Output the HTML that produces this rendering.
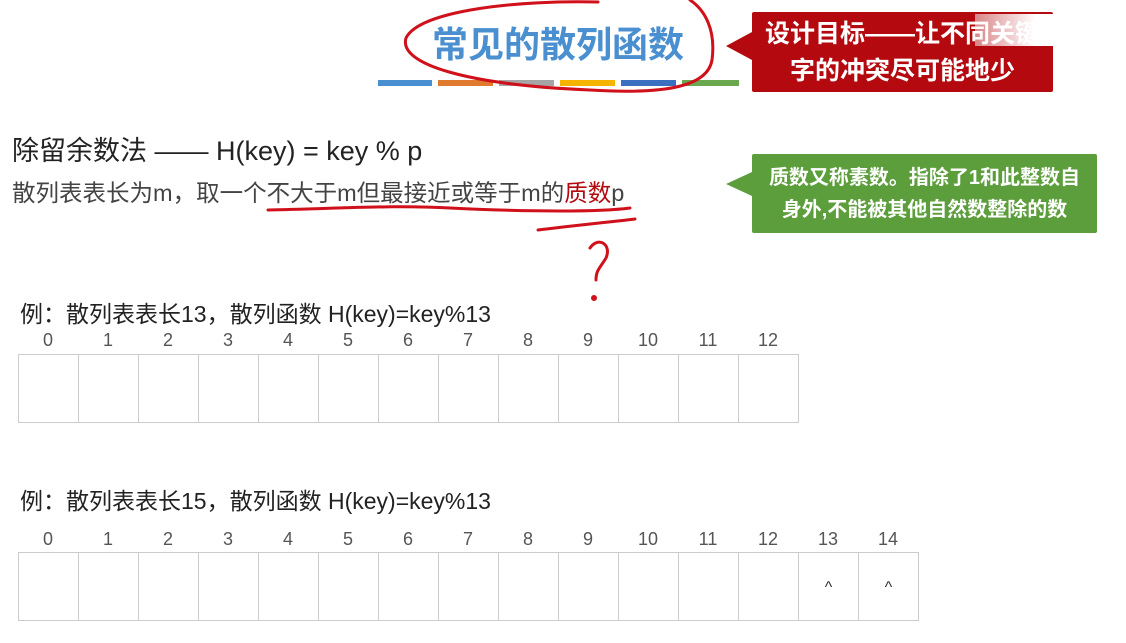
<!DOCTYPE html><html><head><meta charset="utf-8"><style>
body{margin:0;width:1126px;height:643px;background:#fff;position:relative;overflow:hidden;font-family:"Liberation Sans","Noto Sans CJK SC",sans-serif;color:#333}
.a{position:absolute;white-space:nowrap}
.cell{position:absolute;border:1px solid #ccc;box-sizing:border-box;width:61px;height:69px;text-align:center;line-height:69px;font-size:16px}
.idx{position:absolute;width:60px;text-align:center;font-size:18px;color:#555}
</style></head><body>
<div class="a" style="left:432px;top:16px;font-size:36px;font-weight:bold;color:#4a8fd0">常见的散列函数</div>
<div class="a" style="left:378px;top:80px;width:54px;height:6px;background:#4a8fd0"></div>
<div class="a" style="left:438px;top:80px;width:55px;height:6px;background:#e07a2e"></div>
<div class="a" style="left:499px;top:80px;width:55px;height:6px;background:#a5a5a5"></div>
<div class="a" style="left:560px;top:80px;width:55px;height:6px;background:#f4b400"></div>
<div class="a" style="left:621px;top:80px;width:55px;height:6px;background:#3b6fc0"></div>
<div class="a" style="left:682px;top:80px;width:57px;height:6px;background:#6aa84f"></div>
<div class="a" style="left:752px;top:12px;width:301px;height:80px;background:#b3090f;border-radius:2px"></div>
<div class="a" style="left:726px;top:32px;border:14px solid transparent;border-right:26px solid #b3090f;border-left:0"></div>
<div class="a" style="left:752px;top:16px;font-size:25px;font-weight:bold;color:#fff;line-height:37px;text-align:center;width:301px">设计目标——让不同关键<br>字的冲突尽可能地少</div>
<div class="a" style="left:975px;top:14px;width:151px;height:32px;background:linear-gradient(90deg,rgba(255,255,255,.5),#fff 40%)"></div>
<div class="a" style="left:752px;top:154px;width:345px;height:79px;background:#5d9e3c;border-radius:2px"></div>
<div class="a" style="left:726px;top:172px;border:12px solid transparent;border-right:26px solid #5d9e3c;border-left:0"></div>
<div class="a" style="left:752px;top:162px;width:345px;font-size:20px;font-weight:bold;color:#fff;line-height:32px;text-align:center">质数又称素数。指除了1和此整数自<br>身外,不能被其他自然数整除的数</div>
<div class="a" style="left:12px;top:129px;font-size:27px;color:#222">除留余数法 —— H(key) = key % p</div>
<div class="a" style="left:12px;top:174px;font-size:23.5px;color:#444">散列表表长为m，取一个不大于m但最接近或等于m的<span style="color:#b3090f">质数</span>p</div>
<div class="a" style="left:20px;top:295px;font-size:23px;color:#222">例：散列表表长13，散列函数 H(key)=key%13</div>
<div class="a" style="left:20px;top:482px;font-size:23px;color:#222">例：散列表表长15，散列函数 H(key)=key%13</div>
<svg class="a" style="left:0;top:0" width="1126" height="643"><g fill="none" stroke="#d0101a" stroke-width="3" stroke-linecap="round">
<path d="M598 2 C520 0 420 10 406 38 C398 65 470 85 590 90 C670 95 708 85 712 60 C716 30 705 10 690 0"/>
<path d="M268 210 C350 208 400 205 450 208 C530 212 600 212 630 208"/>
<path d="M538 230 C570 226 610 222 635 219"/>
<path d="M590 248 C598 236 612 244 606 258 C600 268 596 270 596 280"/>
<circle cx="594" cy="298" r="1.5" fill="#d0101a"/></g></svg>
<div id="t"></div>
<script>
var h='';
for(var i=0;i<13;i++){h+='<div class="idx" style="left:'+(18+i*60)+'px;top:330px">'+i+'</div><div class="cell" style="left:'+(18+i*60)+'px;top:354px"></div>';}
for(var i=0;i<15;i++){h+='<div class="idx" style="left:'+(18+i*60)+'px;top:529px">'+i+'</div><div class="cell" style="left:'+(18+i*60)+'px;top:552px">'+(i>12?'^':'')+'</div>';}
document.getElementById('t').innerHTML=h;
</script>
</body></html>
